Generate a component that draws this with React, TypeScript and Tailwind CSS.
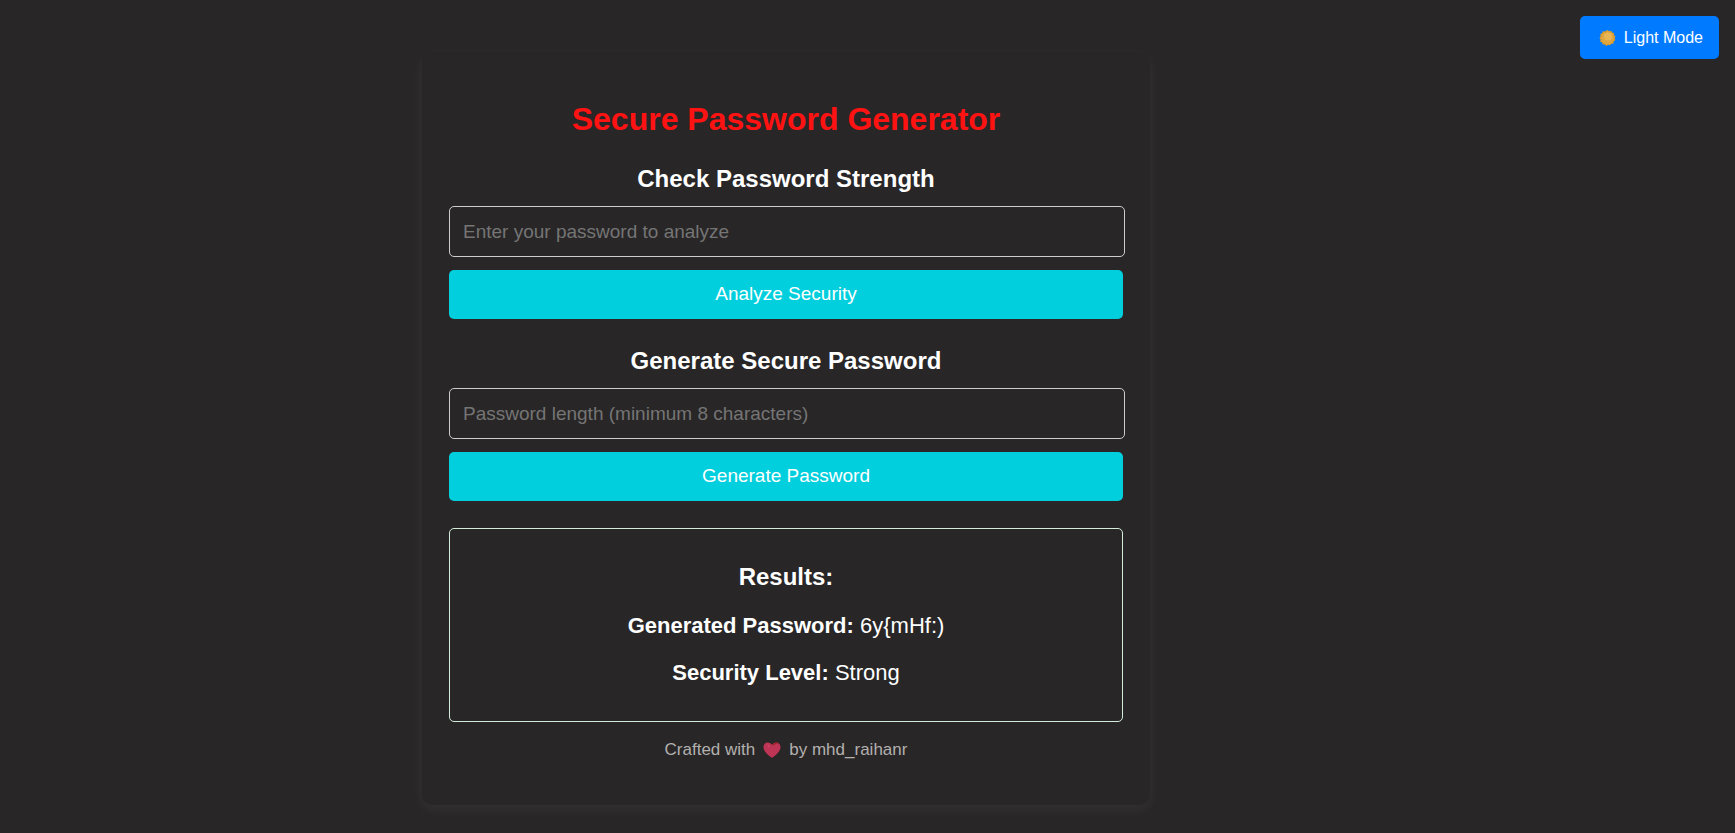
import { useState } from "react";

const SunIcon = () => (
  <svg className="h-4 w-[17px]" viewBox="0 0 16 16" aria-hidden="true">
    <path
      d="M8 0l1.600 1.300 2-.6.9 1.800 2 .5-.1 2.100L16 6.500 15 8.200l.8 1.900-1.600 1.300-.2 2.100-2.100.2-1.300 1.600-2-.6L6.900 16l-1.500-1.500-2.100.1-.7-2-1.900-.8.3-2.100L0 8l1.100-1.800-.4-2 1.900-.9.6-2 2.100.2z"
      fill="#dd9e2c"
    />
    <circle cx="8" cy="8" r="6" fill="#e0a640" />
    <circle cx="8.500" cy="6.500" r="4" fill="#e8b555" />
  </svg>
);

const HeartIcon = () => (
  <svg className="h-4 w-[18px]" viewBox="0 0 18 16" aria-hidden="true">
    <path
      d="M9 15.800C4.500 12.800.5 9 .5 5.200.5 2.500 2.300.5 4.800.5 6.600.5 8.200 1.500 9 3 9.800 1.500 11.400.5 13.200.5c2.500 0 4.300 2 4.300 4.700 0 3.800-4 7.600-8.500 10.600z"
      fill="#be3455"
    />
    <path d="M9 3c.8-1.500 2.400-2.500 4.200-2.500 1 0 1.900.3 2.600.9-1.600.2-2.800.4-3.400 1.200-.8-.2-1.600.2-2 1.200z" fill="#a3242f" />
    <circle cx="5.500" cy="3.800" r=".6" fill="#d96a80" />
  </svg>
);

const inputClass =
  "h-[51px] w-[calc(100%+2px)] rounded-[5px] border border-[#cccccc] bg-transparent px-[13px] text-[19px] text-white placeholder-[#757575] outline-none";
const buttonClass =
  "mt-[13px] h-[49px] w-full rounded-[5px] bg-[#02cfdd] text-[19px] text-white hover:bg-[#02b8c4]";

export default function App() {
  const [password, setPassword] = useState("");
  const [length, setLength] = useState("");
  const [generated, setGenerated] = useState("6y{mHf:)");
  const [level, setLevel] = useState("Strong");

  const getLevel = (value: string) => {
    const checks = [/[a-z]/, /[A-Z]/, /[0-9]/, /[^a-zA-Z0-9]/];
    const score = checks.filter((check) => check.test(value)).length;
    if (value.length < 8 || score < 2) return "Weak";
    return score < 4 ? "Medium" : "Strong";
  };

  const generatePassword = () => {
    const size = Math.max(8, Number(length) || 8);
    let result = "";
    for (let i = 0; i < size; i++) {
      result += String.fromCharCode(33 + Math.floor(Math.random() * 94));
    }
    setGenerated(result);
    setLevel(getLevel(result));
  };

  return (
    <div className="min-h-screen bg-[#282627] pt-[52px] pb-7 font-['Liberation_Sans',Arial,sans-serif] text-white">
      <button
        type="button"
        className="absolute top-4 right-4 flex h-[43px] items-center gap-2 rounded-[5px] bg-[#007bff] pr-4 pl-[19px] text-[16px]"
      >
        <SunIcon />
        Light Mode
      </button>

      <div className="px-4 lg:pr-[163px] lg:pl-0">
        <main className="mx-auto max-w-[728px] rounded-[11px] bg-[#282627] px-[27px] pt-[49px] pb-11 text-center shadow-[0_4px_13px_rgba(255,255,255,0.06)]">
          <h1 className="text-[32px] leading-9 font-bold text-[#ff1212]">Secure Password Generator</h1>

          <section className="mt-7">
            <h2 className="mb-[13px] text-[24px] leading-7 font-bold">Check Password Strength</h2>
            <input
              type="text"
              aria-label="Password to analyze"
              placeholder="Enter your password to analyze"
              className={inputClass}
              value={password}
              onChange={(e) => setPassword(e.target.value)}
            />
            <button type="button" className={buttonClass} onClick={() => setLevel(getLevel(password))}>
              Analyze Security
            </button>
          </section>

          <section className="mt-7">
            <h2 className="mb-[13px] text-[24px] leading-7 font-bold">Generate Secure Password</h2>
            <input
              type="number"
              min={8}
              aria-label="Password length"
              placeholder="Password length (minimum 8 characters)"
              className={inputClass}
              value={length}
              onChange={(e) => setLength(e.target.value)}
            />
            <button type="button" className={buttonClass} onClick={generatePassword}>
              Generate Password
            </button>
          </section>

          <section className="mt-[27px] rounded-[5px] border border-[#d4edda] px-4 pt-[34px] pb-[35px]">
            <h3 className="text-[24px] leading-7 font-bold">Results:</h3>
            <p className="mt-[22px] text-[22px] leading-[26px]">
              <strong>Generated Password:</strong> {generated}
            </p>
            <p className="mt-[21px] text-[22px] leading-[26px]">
              <strong>Security Level:</strong> {level}
            </p>
          </section>

          <footer className="mt-[17px] flex items-center justify-center gap-2 text-[17px] leading-[22px] text-[#b3b0ae]">
            <span>Crafted with</span>
            <HeartIcon />
            <span>by mhd_raihanr</span>
          </footer>
        </main>
      </div>
    </div>
  );
}
